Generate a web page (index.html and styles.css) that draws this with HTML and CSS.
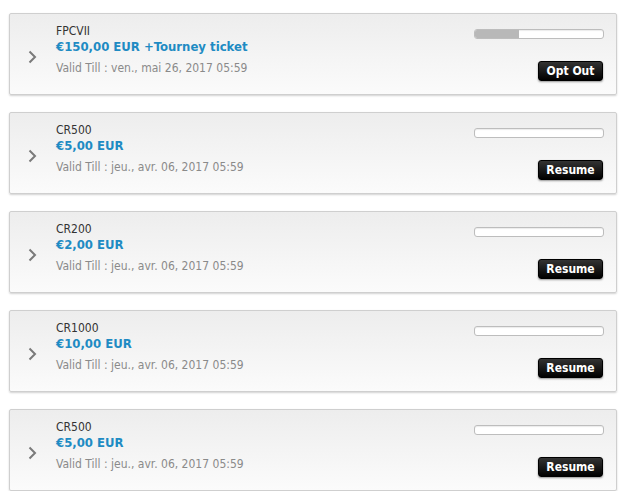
FILE: index.html
```html
<!DOCTYPE html>
<html>
<head>
<meta charset="utf-8">
<link rel="stylesheet" href="styles.css">
</head>
<body>
<div class="list">
  <div class="card">
    <div class="chev"><svg width="9" height="14" viewBox="0 0 9 14"><path d="M1.5 1.5 L7 7 L1.5 12.5" fill="none" stroke="#7a7a7a" stroke-width="2"/></svg></div>
    <div class="info">
      <div class="code">FPCVII</div>
      <div class="amount">€150,00 EUR +Tourney ticket</div>
      <div class="valid">Valid Till : ven., mai 26, 2017 05:59</div>
    </div>
    <div class="side">
      <div class="bar"><div class="fill" style="width:34%"></div></div>
      <button class="btn">Opt Out</button>
    </div>
  </div>
  <div class="card">
    <div class="chev"><svg width="9" height="14" viewBox="0 0 9 14"><path d="M1.5 1.5 L7 7 L1.5 12.5" fill="none" stroke="#7a7a7a" stroke-width="2"/></svg></div>
    <div class="info">
      <div class="code">CR500</div>
      <div class="amount">€5,00 EUR</div>
      <div class="valid">Valid Till : jeu., avr. 06, 2017 05:59</div>
    </div>
    <div class="side">
      <div class="bar"></div>
      <button class="btn">Resume</button>
    </div>
  </div>
  <div class="card">
    <div class="chev"><svg width="9" height="14" viewBox="0 0 9 14"><path d="M1.5 1.5 L7 7 L1.5 12.5" fill="none" stroke="#7a7a7a" stroke-width="2"/></svg></div>
    <div class="info">
      <div class="code">CR200</div>
      <div class="amount">€2,00 EUR</div>
      <div class="valid">Valid Till : jeu., avr. 06, 2017 05:59</div>
    </div>
    <div class="side">
      <div class="bar"></div>
      <button class="btn">Resume</button>
    </div>
  </div>
  <div class="card">
    <div class="chev"><svg width="9" height="14" viewBox="0 0 9 14"><path d="M1.5 1.5 L7 7 L1.5 12.5" fill="none" stroke="#7a7a7a" stroke-width="2"/></svg></div>
    <div class="info">
      <div class="code">CR1000</div>
      <div class="amount">€10,00 EUR</div>
      <div class="valid">Valid Till : jeu., avr. 06, 2017 05:59</div>
    </div>
    <div class="side">
      <div class="bar"></div>
      <button class="btn">Resume</button>
    </div>
  </div>
  <div class="card">
    <div class="chev"><svg width="9" height="14" viewBox="0 0 9 14"><path d="M1.5 1.5 L7 7 L1.5 12.5" fill="none" stroke="#7a7a7a" stroke-width="2"/></svg></div>
    <div class="info">
      <div class="code">CR500</div>
      <div class="amount">€5,00 EUR</div>
      <div class="valid">Valid Till : jeu., avr. 06, 2017 05:59</div>
    </div>
    <div class="side">
      <div class="bar"></div>
      <button class="btn">Resume</button>
    </div>
  </div>
</div>
</body>
</html>
```
FILE: styles.css
```css
html, body {
  margin: 0;
  padding: 0;
  background: #fff;
}
body {
  font-family: "DejaVu Sans Condensed", "DejaVu Sans", sans-serif;
}
.list {
  display: flex;
  flex-direction: column;
  gap: 17px;
  padding: 13px 0 0 9px;
  width: 608px;
}
.card {
  box-sizing: border-box;
  height: 82px;
  border: 1px solid #cfcfcf;
  border-radius: 2px;
  background: linear-gradient(#ededed, #fbfbfb);
  box-shadow: 0 1px 2px rgba(0,0,0,0.18);
  display: flex;
  align-items: stretch;
}
.chev {
  width: 46px;
  display: flex;
  align-items: center;
  padding-left: 18px;
  box-sizing: border-box;
  padding-top: 6px;
}
.info {
  flex: 1;
  padding-top: 10px;
}
.code {
  font-size: 12px;
  line-height: 15px;
  color: #333;
}
.amount {
  font-size: 13px;
  line-height: 16px;
  font-weight: bold;
  color: #1e8bc3;
}
.valid {
  margin-top: 6px;
  font-size: 12px;
  line-height: 15px;
  color: #8a8a8a;
}
.side {
  padding-top: 15px;
  display: flex;
  flex-direction: column;
  align-items: flex-end;
  padding-right: 12px;
  width: 130px;
}
.bar {
  box-sizing: border-box;
  width: 130px;
  height: 10px;
  border: 1px solid #bdbdbd;
  border-radius: 3px;
  background: #fff;
  box-shadow: inset 0 1px 1px rgba(0,0,0,0.08);
  overflow: hidden;
}
.fill {
  height: 100%;
  background: #b8b8b8;
}
.btn {
  margin-top: 22px;
  margin-right: 1px;
  width: 65px;
  height: 20px;
  padding: 0;
  border: 1px solid #000;
  border-radius: 3px;
  background: linear-gradient(#333, #000);
  color: #fff;
  font-family: inherit;
  font-size: 12px;
  font-weight: bold;
  box-shadow: 0 1px 2px rgba(0,0,0,0.4);
}
```
